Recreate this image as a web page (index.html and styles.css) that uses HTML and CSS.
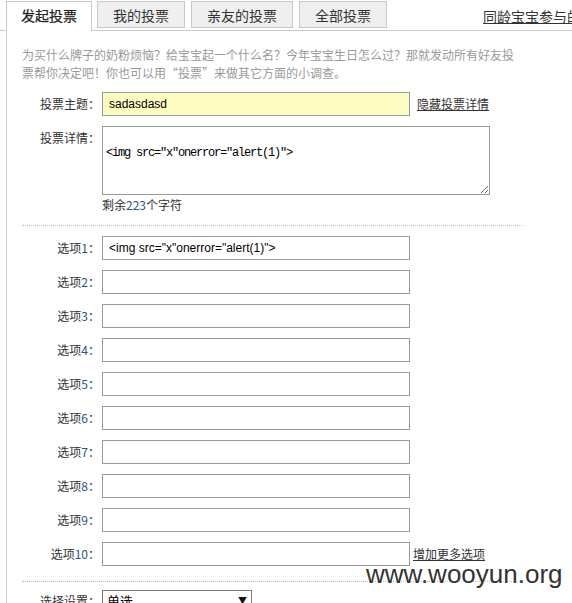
FILE: index.html
```html
<!DOCTYPE html>
<html lang="zh-CN">
<head>
<meta charset="utf-8">
<title>发起投票</title>
<link rel="stylesheet" href="styles.css">
</head>
<body>
<div class="page">
  <div class="tabs">
    <a class="tab active">发起投票</a>
    <a class="tab">我的投票</a>
    <a class="tab">亲友的投票</a>
    <a class="tab">全部投票</a>
    <a class="side-link">同龄宝宝参与的投票</a>
  </div>
  <div class="main">
    <p class="desc">为买什么牌子的奶粉烦恼？给宝宝起一个什么名？今年宝宝生日怎么过？那就发动所有好友投票帮你决定吧！你也可以用“投票”来做其它方面的小调查。</p>
    <div class="form">
      <div class="row">
        <label class="lbl">投票主题：</label>
        <input class="inp subject" type="text" value="sadasdasd">
        <a class="link">隐藏投票详情</a>
      </div>
      <div class="row top">
        <label class="lbl pt">投票详情：</label>
        <div class="col">
          <textarea class="detail">

&lt;img src="x"onerror="alert(1)"&gt;</textarea>
          <div class="remain">剩余<span class="num">223</span>个字符</div>
        </div>
      </div>
      <div class="sep"></div>
      <div class="options">
        <div class="row"><label class="lbl">选项<span class="num">1</span>：</label><input class="inp" type="text" value="&lt;img src=&quot;x&quot;onerror=&quot;alert(1)&quot;&gt;"></div>
        <div class="row"><label class="lbl">选项<span class="num">2</span>：</label><input class="inp" type="text"></div>
        <div class="row"><label class="lbl">选项<span class="num">3</span>：</label><input class="inp" type="text"></div>
        <div class="row"><label class="lbl">选项<span class="num">4</span>：</label><input class="inp" type="text"></div>
        <div class="row"><label class="lbl">选项<span class="num">5</span>：</label><input class="inp" type="text"></div>
        <div class="row"><label class="lbl">选项<span class="num">6</span>：</label><input class="inp" type="text"></div>
        <div class="row"><label class="lbl">选项<span class="num">7</span>：</label><input class="inp" type="text"></div>
        <div class="row"><label class="lbl">选项<span class="num">8</span>：</label><input class="inp" type="text"></div>
        <div class="row"><label class="lbl">选项<span class="num">9</span>：</label><input class="inp" type="text"></div>
        <div class="row"><label class="lbl">选项<span class="num">10</span>：</label><input class="inp" type="text"><a class="link add">增加更多选项</a></div>
      </div>
      <div class="sep sep2"></div>
      <div class="row">
        <label class="lbl">选择设置：</label>
        <div class="select"><span>单选</span><span class="arrow">▼</span></div>
      </div>
    </div>
  </div>
  <div class="watermark">www.wooyun.org</div>
</div>
</body>
</html>
```

FILE: styles.css
```css
html, body {
  margin: 0;
  padding: 0;
  background: #fff;
  overflow: hidden;
}
body {
  font-family: "Noto Sans CJK SC", "Liberation Sans", sans-serif;
  font-size: 12px;
  color: #333;
}
.page {
  position: relative;
  width: 572px;
  height: 603px;
  overflow: hidden;
}
.tabs {
  display: flex;
  align-items: flex-start;
  padding: 1px 0 0 6px;
  height: 29px;
  border-bottom: 1px solid #ccc;
  white-space: nowrap;
}
.tab {
  box-sizing: border-box;
  display: flex;
  align-items: center;
  justify-content: center;
  height: 27px;
  padding: 0 15px;
  margin-right: 6px;
  border: 1px solid #c8c8c8;
  background: #efefef;
  font-size: 14px;
  color: #333;
  flex-shrink: 0;
}
.tab.active {
  height: 30px;
  padding: 0 14px 3px;
  margin-right: 5px;
  border-bottom: none;
  background: #fff;
  color: #222;
  -webkit-text-stroke: 0.25px #222;
}
.side-link {
  margin-left: 90px;
  margin-top: 5px;
  font-size: 14px;
  line-height: 20px;
  color: #333;
  text-decoration: underline;
  flex-shrink: 0;
}
.main {
  margin-left: 6px;
  border-left: 1px solid #ccc;
  padding: 15px 0 0 15px;
  height: 560px;
}
.desc {
  margin: 0;
  width: 500px;
  line-height: 18px;
  color: #999;
}
.form {
  margin-top: 10px;
}
.row {
  display: flex;
  align-items: center;
}
.row.top {
  align-items: flex-start;
  margin-top: 10px;
}
.lbl {
  width: 78px;
  margin-right: 2px;
  text-align: right;
  line-height: 18px;
  color: #333;
  flex-shrink: 0;
}
.lbl.pt {
  padding-top: 3px;
}
.num {
  color: #2f4f86;
}
.inp {
  box-sizing: border-box;
  width: 308px;
  height: 24px;
  margin: 0;
  padding: 0 6px;
  border: 1px solid #9a9a9a;
  border-radius: 0;
  background: #fff;
  font-family: "Liberation Sans", Arial, sans-serif;
  font-size: 12px;
  color: #000;
  outline: none;
}
.inp.subject {
  background: #fdfdc2;
}
.link {
  margin-left: 7px;
  color: #333;
  text-decoration: underline;
  line-height: 18px;
}
.link.add {
  margin-left: 3px;
}
.col {
  display: flex;
  flex-direction: column;
}
.detail {
  box-sizing: border-box;
  display: block;
  width: 388px;
  height: 69px;
  margin: 0;
  padding: 2px 3px;
  border: 1px solid #9a9a9a;
  border-radius: 0;
  font-family: "Liberation Mono", monospace;
  font-size: 12px;
  letter-spacing: -1.2px;
  line-height: 16px;
  color: #000;
  outline: none;
}
.remain {
  margin-top: 1px;
  line-height: 18px;
  color: #333;
}
.sep {
  width: 500px;
  margin-top: 11px;
  border-top: 1px dotted #bbb;
}
.sep2 {
  margin-top: 15px;
}
.options {
  display: flex;
  flex-direction: column;
  gap: 10px;
  margin-top: 10px;
}
.sep2 + .row {
  margin-top: 8px;
}
.select {
  box-sizing: border-box;
  display: flex;
  align-items: center;
  justify-content: space-between;
  width: 150px;
  height: 21px;
  padding: 0 4px 0 4px;
  border: 1px solid #7a7a7a;
  font-size: 13px;
  color: #000;
}
.arrow {
  font-size: 9px;
  color: #111;
}
.watermark {
  position: absolute;
  left: 366px;
  top: 559px;
  font-family: "Liberation Sans", Arial, sans-serif;
  font-size: 26px;
  line-height: 30px;
  color: #333;
  text-shadow: 0 0 2px #fff, 0 0 2px #fff;
}
```
